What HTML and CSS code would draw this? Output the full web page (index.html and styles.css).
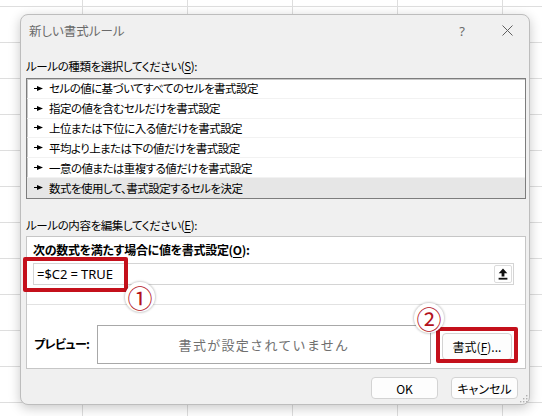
FILE: index.html
```html
<!DOCTYPE html>
<html lang="ja">
<head>
<meta charset="utf-8">
<title>新しい書式ルール</title>
<link rel="stylesheet" href="styles.css">
</head>
<body>
<div class="dialog">
  <div class="titlebar">
    <span class="title">新しい書式ルール</span>
    <span class="help">?</span>
    <span class="close"><svg width="11" height="11" viewBox="0 0 11 11"><path d="M0.5 0.5 L10.5 10.5 M10.5 0.5 L0.5 10.5" stroke="#5f5f5f" stroke-width="1"/></svg></span>
  </div>
  <div class="content">
    <div class="label first">ルールの種類を選択してください(<u>S</u>):</div>
    <ul class="rules">
      <li><svg class="arrow" width="9" height="7" viewBox="0 0 9 7"><path d="M0 2.9 H3 L3 1 L9 3.5 L3 6 L3 4.1 H0 Z"/></svg>セルの値に基づいてすべてのセルを書式設定</li>
      <li><svg class="arrow" width="9" height="7" viewBox="0 0 9 7"><path d="M0 2.9 H3 L3 1 L9 3.5 L3 6 L3 4.1 H0 Z"/></svg>指定の値を含むセルだけを書式設定</li>
      <li><svg class="arrow" width="9" height="7" viewBox="0 0 9 7"><path d="M0 2.9 H3 L3 1 L9 3.5 L3 6 L3 4.1 H0 Z"/></svg>上位または下位に入る値だけを書式設定</li>
      <li><svg class="arrow" width="9" height="7" viewBox="0 0 9 7"><path d="M0 2.9 H3 L3 1 L9 3.5 L3 6 L3 4.1 H0 Z"/></svg>平均より上または下の値だけを書式設定</li>
      <li><svg class="arrow" width="9" height="7" viewBox="0 0 9 7"><path d="M0 2.9 H3 L3 1 L9 3.5 L3 6 L3 4.1 H0 Z"/></svg>一意の値または重複する値だけを書式設定</li>
      <li class="selected"><svg class="arrow" width="9" height="7" viewBox="0 0 9 7"><path d="M0 2.9 H3 L3 1 L9 3.5 L3 6 L3 4.1 H0 Z"/></svg>数式を使用して、書式設定するセルを決定</li>
    </ul>
    <div class="label second">ルールの内容を編集してください(<u>E</u>):</div>
    <div class="editor">
      <div class="editor-top">
        <div class="bold-label">次の数式を満たす場合に値を書式設定(<u>O</u>):</div>
        <div class="formula">
          <span class="formula-text">=$C2<span class="eq">=</span>TRUE</span>
          <span class="collapse"><svg width="10" height="12" viewBox="0 0 10 12"><path d="M5 0.5 L9.3 5.2 H6.4 V8.6 H3.6 V5.2 H0.7 Z" fill="#111"/><rect x="0.6" y="9.8" width="8.8" height="1.8" fill="#111"/></svg></span>
        </div>
      </div>
      <div class="preview-row">
        <div class="preview-label">プレビュー:</div>
        <div class="preview-box">書式が設定されていません</div>
        <span class="btn fmt">書式(<u>F</u>)...</span>
      </div>
    </div>
    <div class="actions">
      <span class="btn">OK</span>
      <span class="btn">キャンセル</span>
    </div>
  </div>
  <svg class="grip" width="8" height="8" viewBox="0 0 8 8"><g fill="#b0b0b0"><rect x="6" y="0" width="1.4" height="1.4"/><rect x="3" y="3" width="1.4" height="1.4"/><rect x="6" y="3" width="1.4" height="1.4"/><rect x="0" y="6" width="1.4" height="1.4"/><rect x="3" y="6" width="1.4" height="1.4"/><rect x="6" y="6" width="1.4" height="1.4"/></g></svg>
</div>
<div class="mark mark1"></div>
<div class="mark mark2"></div>
<div class="badge badge1"><span class="num">①</span></div>
<div class="badge badge2"><span class="num">②</span></div>
</body>
</html>
```
FILE: styles.css
```css
html, body {
  margin: 0;
  padding: 0;
}
body {
  position: relative;
  width: 542px;
  height: 416px;
  overflow: hidden;
  background-color: #fff;
  background-image:
    linear-gradient(to right, #dedede 1px, transparent 1px),
    linear-gradient(to bottom, #dedede 1px, transparent 1px);
  background-size: 105px 36px;
  background-position: 82px 6px;
  font-family: "Noto Sans CJK JP", "Noto Sans", sans-serif;
  font-size: 12px;
  color: #000;
  padding-top: 14px;
  box-sizing: border-box;
}
.dialog {
  position: relative;
  margin-left: 20px;
  width: 510px;
  height: 391px;
  box-sizing: border-box;
  border: 1px solid #bdbdbd;
  border-radius: 8px;
  background: #f0f0f0;
  box-shadow: 0 3px 12px rgba(0, 0, 0, 0.22);
  display: flex;
  flex-direction: column;
}
.titlebar {
  height: 31px;
  display: flex;
  align-items: center;
  padding: 0 12px 0 8px;
  color: #6a6a6a;
  font-feature-settings: "palt";
}
.title {
  font-size: 12.5px;
  flex: 1;
}
.help {
  width: 20px;
  text-align: center;
  font-family: "Noto Sans", sans-serif;
  font-size: 13px;
  color: #6a6a6a;
}
.close {
  width: 20px;
  margin-left: 25px;
  display: flex;
  justify-content: center;
}
.content {
  padding: 0 3px 0 5px;
  display: flex;
  flex-direction: column;
  font-feature-settings: "palt";
}
.label {
  line-height: 17px;
  font-size: 11.5px;
  letter-spacing: -0.4px;
}
.label.first {
  margin-top: 12px;
  margin-bottom: 3px;
}
.label.second {
  margin-top: 18px;
  margin-bottom: 2px;
}
u {
  text-decoration-thickness: 1px;
  text-underline-offset: 2px;
}
.rules {
  list-style: none;
  margin: 0;
  padding: 0;
  height: 121px;
  box-sizing: border-box;
  border: 1px solid #7d7d7d;
  box-shadow: inset 1px 1px 0 #c8c8c8;
  background: #fff;
}
.rules li {
  height: 19.8px;
  box-sizing: border-box;
  border-bottom: 1px solid #f2f2f2;
  display: flex;
  align-items: center;
  padding-left: 7px;
  font-size: 11.5px;
  letter-spacing: -0.55px;
}
.rules li.selected {
  background: #e6e6e6;
  border-bottom: none;
}
.arrow {
  margin-right: 6px;
  flex: none;
}
.editor {
  height: 133px;
  box-sizing: border-box;
  border: 1px solid #c6c6c6;
  background: #fff;
  display: flex;
  flex-direction: column;
}
.editor-top {
  height: 68px;
  box-sizing: border-box;
  padding: 5px 11px 0 6px;
  border-bottom: 1px solid #e2e2e2;
}
.bold-label {
  font-weight: bold;
  line-height: 16px;
  font-size: 12px;
  letter-spacing: -0.3px;
}
.formula {
  margin-top: 5px;
  height: 22px;
  box-sizing: border-box;
  border: 1px solid #d4d4d4;
  display: flex;
  align-items: center;
  padding-left: 3px;
}
.formula-text {
  flex: 1;
  font-family: "Noto Sans", sans-serif;
  font-size: 13px;
}
.eq {
  margin: 0 3px;
}
.collapse {
  width: 18px;
  height: 18px;
  margin-right: 1px;
  box-sizing: border-box;
  border: 1px solid #dcdcdc;
  border-radius: 2px;
  display: flex;
  align-items: center;
  justify-content: center;
  background: #fff;
}
.preview-row {
  flex: 1;
  display: flex;
  align-items: flex-start;
  padding: 20px 0 0 7px;
}
.preview-label {
  width: 63px;
  margin-top: 11px;
  font-weight: bold;
  line-height: 16px;
  letter-spacing: -0.6px;
}
.preview-box {
  width: 334px;
  height: 39px;
  box-sizing: border-box;
  border: 1px solid #a8a8a8;
  display: flex;
  align-items: center;
  justify-content: center;
  color: #707070;
  font-size: 13px;
  letter-spacing: 1.3px;
  font-feature-settings: normal;
}
.btn {
  height: 22px;
  width: 67px;
  box-sizing: border-box;
  border: 1px solid #d3d3d3;
  border-radius: 4px;
  background: #fdfdfd;
  display: flex;
  align-items: center;
  justify-content: center;
  font-size: 12px;
}
.fmt {
  width: 70px;
  height: 27px;
  margin-top: 8px;
  margin-left: 11px;
}
.actions {
  margin-top: 8px;
  margin-right: 8px;
  display: flex;
  justify-content: flex-end;
  gap: 13px;
}
.grip {
  position: absolute;
  right: 1px;
  bottom: 1px;
}
.mark {
  position: absolute;
  box-sizing: border-box;
  border: 4px solid #c4101b;
  border-radius: 2px;
}
.mark1 {
  left: 23px;
  top: 257px;
  width: 105px;
  height: 35px;
}
.mark2 {
  left: 436px;
  top: 327px;
  width: 82px;
  height: 36px;
}
.badge {
  position: absolute;
  width: 30px;
  height: 30px;
  border-radius: 50%;
  background: #fff;
  box-shadow: 0 0 2px 1px rgba(0, 0, 0, 0.18);
  display: flex;
  align-items: center;
  justify-content: center;
}
.badge1 {
  left: 125px;
  top: 282px;
}
.badge2 {
  left: 414px;
  top: 303px;
}
.num {
  color: #b3121c;
  font-family: "Noto Sans CJK JP", sans-serif;
  font-size: 25px;
  line-height: 25px;
  height: 25px;
}
```
